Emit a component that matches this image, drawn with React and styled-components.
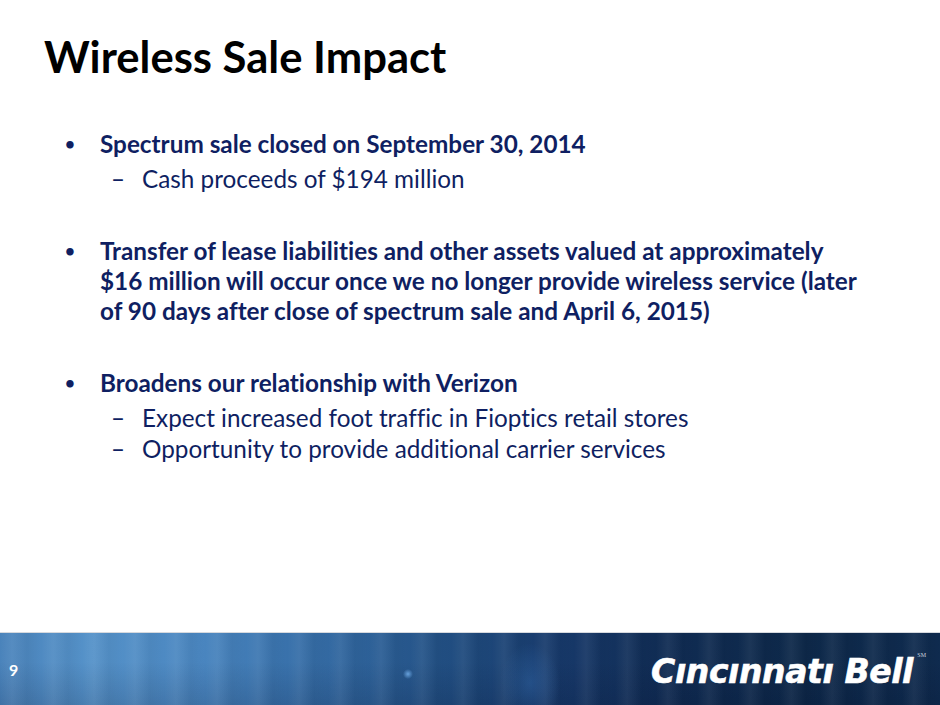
import React from "react";
import styled, { createGlobalStyle } from "styled-components";

const GlobalStyle = createGlobalStyle`
  html, body {
    margin: 0;
    padding: 0;
    background: #fff;
  }
`;

const items = [
  {
    id: 0,
    lines: ["Spectrum sale closed on September 30, 2014"],
    subs: ["Cash proceeds of $194 million"],
  },
  {
    id: 1,
    lines: [
      "Transfer of lease liabilities and other assets valued at approximately",
      "$16 million will occur once we no longer provide wireless service (later",
      "of 90 days after close of spectrum sale and April 6, 2015)",
    ],
    subs: [],
  },
  {
    id: 2,
    lines: ["Broadens our relationship with Verizon"],
    subs: [
      "Expect increased foot traffic in Fioptics retail stores",
      "Opportunity to provide additional carrier services",
    ],
  },
];

const App = () => {
  return (
    <Slide>
      <GlobalStyle />
      <Title>Wireless Sale Impact</Title>

      <Bullets>
        {items.map((item) => (
          <Item key={item.id}>
            <Main>
              <Dot>•</Dot>
              <MainText>
                {item.lines.map((l, i) => (
                  <span key={i}>{l}</span>
                ))}
              </MainText>
            </Main>
            {item.subs.length > 0 && (
              <SubList>
                {item.subs.map((s, i) => (
                  <Sub key={i}>
                    <Dash>–</Dash>
                    <span>{s}</span>
                  </Sub>
                ))}
              </SubList>
            )}
          </Item>
        ))}
      </Bullets>

      <Footer>
        <PageNum>9</PageNum>
        <Logo>
          Cıncınnatı Bell<Mark>SM</Mark>
        </Logo>
      </Footer>
    </Slide>
  );
};

export default App;

const Slide = styled.div`
  width: 940px;
  height: 705px;
  display: flex;
  flex-direction: column;
  overflow: hidden;
  font-family: Lato, "Open Sans", sans-serif;
  font-variant-ligatures: none;
`;

const Title = styled.h1`
  margin: 28px 0 0 44px;
  font-size: 43.6px;
  line-height: 56px;
  font-weight: 700;
  color: #000;
`;

const Bullets = styled.ul`
  list-style: none;
  margin: 45px 0 0 0;
  padding: 0;
  flex: 1;
  color: #0f1f62;
  font-size: 24.3px;
  line-height: 30px;
`;

const Item = styled.li`
  & + & {
    margin-top: 42px;
  }
`;

const Main = styled.div`
  display: flex;
  padding-left: 65px;
  font-weight: 700;
`;

const Dot = styled.span`
  width: 35px;
  flex: none;
  font-size: 17px;
`;

const MainText = styled.div`
  display: flex;
  flex-direction: column;
  white-space: nowrap;
`;

const SubList = styled.div`
  margin-top: 5px;
  display: flex;
  flex-direction: column;
  gap: 1px;
`;

const Sub = styled.div`
  display: flex;
  padding-left: 112px;
  font-weight: 400;
  white-space: nowrap;
`;

const Dash = styled.span`
  width: 30px;
  flex: none;
  font-family: "DejaVu Sans", sans-serif;
  font-size: 24px;
`;

const Footer = styled.footer`
  height: 72px;
  flex: none;
  border-top: 1px solid #d6d9de;
  display: flex;
  align-items: center;
  justify-content: space-between;
  padding: 0 27px 0 9px;
  background:
    radial-gradient(circle at 408px 41px, rgba(110, 170, 230, 0.9) 0, rgba(110, 170, 230, 0) 5px),
    radial-gradient(ellipse 30px 40px at 530px 50px, rgba(60, 120, 190, 0.35), rgba(60, 120, 190, 0)),
    repeating-linear-gradient(90deg,
      rgba(255, 255, 255, 0) 0px,
      rgba(255, 255, 255, 0.06) 12px,
      rgba(0, 0, 0, 0.04) 27px,
      rgba(255, 255, 255, 0) 41px),
    linear-gradient(180deg, rgba(0, 0, 0, 0) 40%, rgba(0, 10, 40, 0.15) 100%),
    linear-gradient(90deg,
      #4a83bb 0px,
      #5592c9 90px,
      #4a86c0 200px,
      #3a73ad 280px,
      #2b5e95 380px,
      #1f4b7e 460px,
      #17396a 560px,
      #102c54 660px,
      #0d2849 800px,
      #0f2b4f 940px);
`;

const PageNum = styled.span`
  color: #fff;
  font-weight: 700;
  font-size: 16px;
  font-family: Lato, sans-serif;
`;

const Logo = styled.div`
  position: relative;
  color: #fff;
  font-family: "DejaVu Sans", sans-serif;
  font-weight: 700;
  font-style: italic;
  font-size: 33px;
  letter-spacing: -0.4px;
  -webkit-text-stroke: 0.6px #fff;
  line-height: 1;
  margin-top: 4px;
`;

const Mark = styled.sup`
  position: absolute;
  top: -3px;
  right: -13px;
  font-family: "Liberation Serif", serif;
  font-style: normal;
  font-weight: 400;
  font-size: 6px;
  letter-spacing: 0;
  -webkit-text-stroke: 0;
  color: #c9d3df;
`;
